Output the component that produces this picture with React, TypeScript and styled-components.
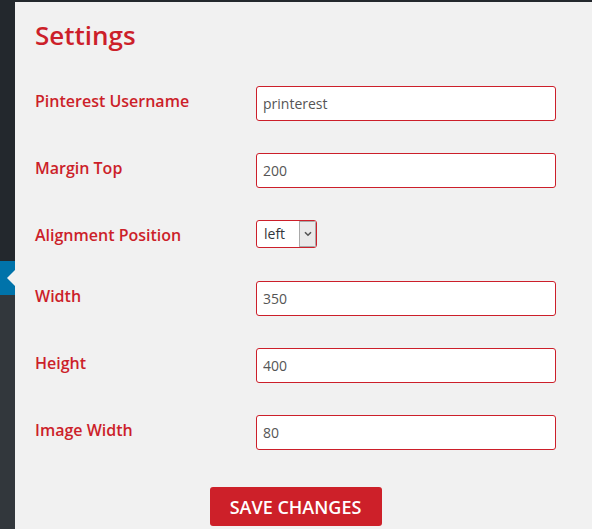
import React from 'react';
import styled, { createGlobalStyle } from 'styled-components';

const GlobalStyle = createGlobalStyle`
  html, body, #root {
    margin: 0;
    padding: 0;
    height: 100%;
  }
  body {
    background: #f1f1f1;
    font-family: "Open Sans", "Liberation Sans", sans-serif;
    overflow: hidden;
  }
`;

const Shell = styled.div`
  display: flex;
  height: 100vh;
`;

const Sidebar = styled.div`
  width: 15px;
  flex-shrink: 0;
  display: flex;
  flex-direction: column;
  background: #32373c;
`;

const SidebarTop = styled.div`
  height: 261px;
  background: #23282d;
`;

// active menu item with the little arrow pointing into the page
const ActiveItem = styled.div`
  position: relative;
  height: 34px;
  background: #0073aa;

  &::after {
    content: '';
    position: absolute;
    right: 0;
    top: 9px;
    border-style: solid;
    border-width: 8px 8px 8px 0;
    border-color: transparent #f1f1f1 transparent transparent;
  }
`;

const Main = styled.div`
  flex: 1;
  border-top: 2px solid #23282d;
  padding-left: 20px;
`;

const Title = styled.h1`
  margin: 15px 0 17px;
  font-size: 26px;
  line-height: 36px;
  font-weight: 600;
  color: #cc1f2a;
`;

const Form = styled.form`
  width: 521px;
`;

const Row = styled.div`
  display: flex;
  align-items: flex-start;
  padding: 16px 0;
`;

const Label = styled.label`
  width: 221px;
  flex-shrink: 0;
  padding-top: 4px;
  font-size: 16px;
  line-height: 22px;
  font-weight: 600;
  color: #cc1f2a;
`;

const TextInput = styled.input`
  box-sizing: border-box;
  width: 300px;
  height: 35px;
  margin: 0;
  padding: 0 6px;
  border: 1px solid #cc1f2a;
  border-radius: 3px;
  background: #fff;
  font-family: inherit;
  font-size: 14px;
  color: #555;
  outline: none;
`;

const SelectBox = styled.div`
  box-sizing: border-box;
  display: flex;
  width: 61px;
  height: 28px;
  margin-bottom: 1px;
  border: 1px solid #cc1f2a;
  border-radius: 3px;
  background: #fff;
  overflow: hidden;
`;

const SelectValue = styled.div`
  flex: 1;
  padding-left: 7px;
  font-size: 14px;
  line-height: 26px;
  color: #32373c;
`;

const SelectArrow = styled.div`
  box-sizing: border-box;
  width: 17px;
  display: flex;
  align-items: center;
  justify-content: center;
  background: #e9e9e9;
  border: 1px solid #a9a9a9;
  color: #555;
`;

const Footer = styled.div`
  display: flex;
  justify-content: center;
  padding-top: 21px;
`;

const SaveButton = styled.button`
  width: 172px;
  height: 39px;
  border: none;
  border-radius: 3px;
  background: #cd2029;
  color: #fff;
  font-family: inherit;
  font-size: 18px;
  font-weight: 600;
  text-transform: uppercase;
  cursor: pointer;
`;

const fields = [
  { label: 'Pinterest Username', value: 'printerest' },
  { label: 'Margin Top', value: '200' },
  { label: 'Alignment Position', value: 'left', select: true },
  { label: 'Width', value: '350' },
  { label: 'Height', value: '400' },
  { label: 'Image Width', value: '80' },
];

const Chevron = () => (
  <svg width="8" height="6" viewBox="0 0 8 6">
    <path d="M1 1.2 L4 4.2 L7 1.2" fill="none" stroke="#555" strokeWidth="1.6" />
  </svg>
);

export default function App() {
  return (
    <>
      <GlobalStyle />
      <Shell>
        <Sidebar>
          <SidebarTop />
          <ActiveItem />
        </Sidebar>
        <Main>
          <Title>Settings</Title>
          <Form onSubmit={(e) => e.preventDefault()}>
            {fields.map((f) => (
              <Row key={f.label}>
                <Label>{f.label}</Label>
                {f.select ? (
                  <SelectBox>
                    <SelectValue>{f.value}</SelectValue>
                    <SelectArrow>
                      <Chevron />
                    </SelectArrow>
                  </SelectBox>
                ) : (
                  <TextInput defaultValue={f.value} />
                )}
              </Row>
            ))}
            <Footer>
              <SaveButton type="submit">Save Changes</SaveButton>
            </Footer>
          </Form>
        </Main>
      </Shell>
    </>
  );
}
